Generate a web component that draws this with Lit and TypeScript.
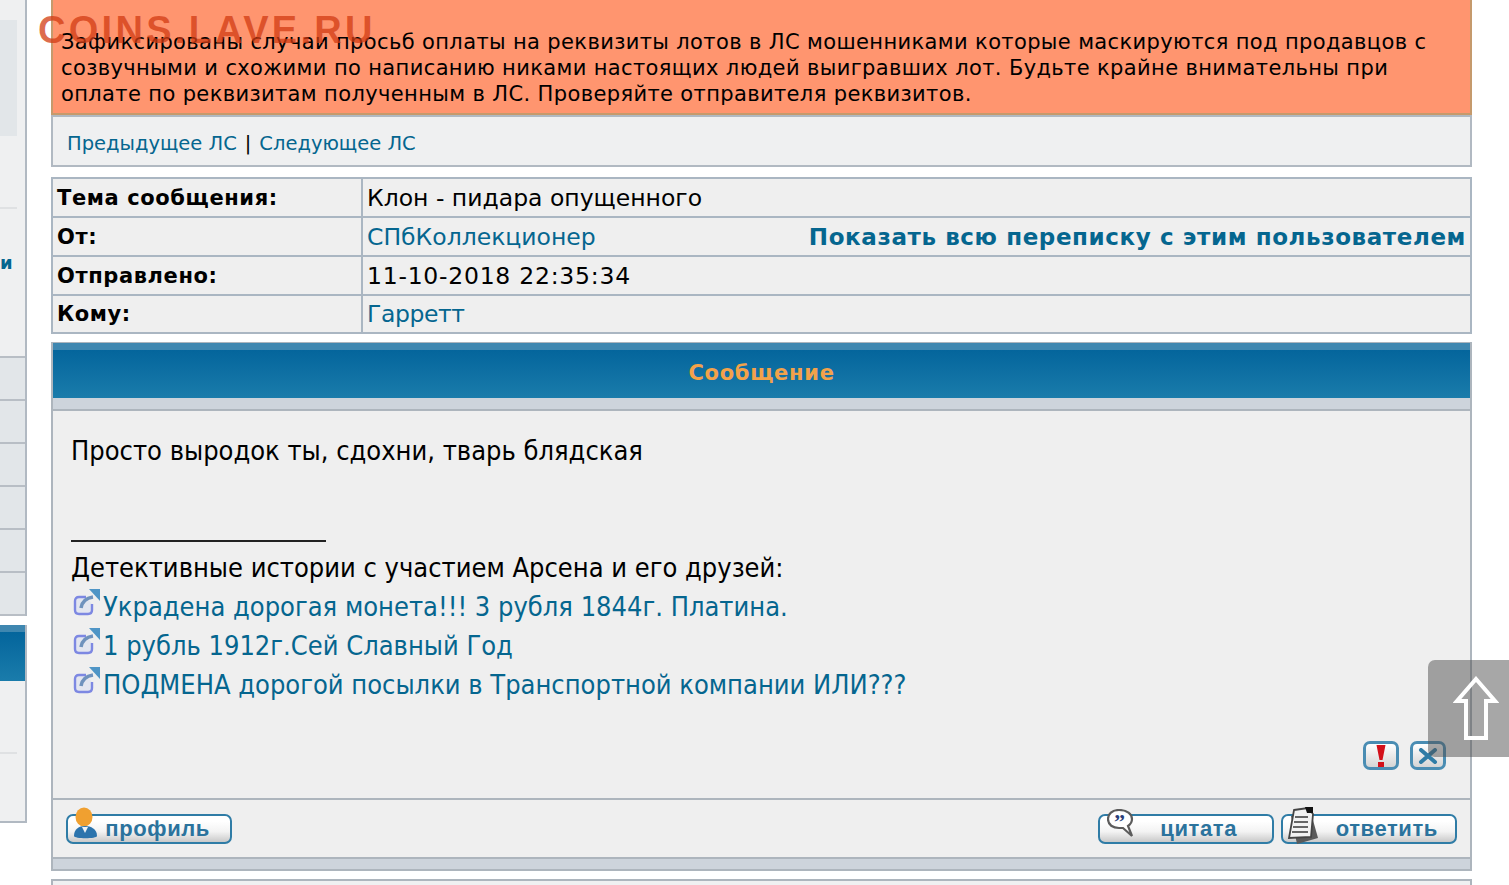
import { LitElement, html, css } from "lit";
import { customElement } from "lit/decorators.js";

const extIcon = html`<svg class="ext" width="28" height="28" viewBox="0 0 28 28" fill="none">
  <path d="M13 9 H6 Q2 9 2 13 V22 Q2 26 6 26 H15 Q19 26 19 22 V16" stroke="#7d88e2" stroke-width="2.4" fill="#e3e6f0"/>
  <path d="M8 20 C9 14 13 10 20 9" stroke="#6f92bd" stroke-width="3.6"/>
  <path d="M16 1 H27 V13 Z" fill="#4f95c6"/>
</svg>`;

@customElement("app-root")
export class AppRoot extends LitElement {
  static styles = css`
    :host { display: block; height: 885px; overflow: hidden; position: relative; background: #fff;
      font-family: "DejaVu Sans", sans-serif; color: #000; }
    a { color: #05668f; text-decoration: none; }
    .page { display: flex; height: 885px; }
    .side { width: 27px; flex: none; display: flex; flex-direction: column; height: 823px; }
    .side-upper { background: #eff0f1; border-right: 2px solid #b1b9c2; flex: none; display: flex; flex-direction: column; }
    .side-top { height: 20px; flex: none; }
    .side-box { height: 116px; width: 17px; background: #e2e6e9; flex: none; }
    .side-mid { height: 220px; flex: none; display: flex; flex-direction: column; }
    .side-rule { margin-top: 71px; height: 2px; background: #dfe1e3; width: 17px; flex: none; }
    .side-word { margin-top: 44px; font-size: 18px; font-weight: 700; line-height: 20px; color: #05668f; }
    .side-list { display: flex; flex-direction: column; flex: none; border-top: 2px solid #b8bec5; }
    .side-item { height: 41px; background: #e2e6e9; border-bottom: 2px solid #b8bec5; }
    .side-gap { height: 9px; background: #fff; flex: none; }
    .side-head { height: 56px; box-sizing: border-box; flex: none; border-right: 2px solid #b1b9c2;
      background: linear-gradient(#3f87b0 0 7px, #04659c 7px, #1a7cab); }
    .side-foot { flex: 1; background: #eff0f1; border: solid #b1b9c2; border-width: 0 2px 2px 0; }

    .main { width: 1421px; margin-left: 24px; flex: none; display: flex; flex-direction: column; }
    .main > * { flex: none; }
    .alert { height: 115px; box-sizing: border-box; background: #ff956f; border: solid #c59a6c; border-width: 0 2px 2px 2px;
      padding: 29px 8px 0; font-size: 21px; line-height: 26px; letter-spacing: 0.37px; }
    .nav { height: 52px; box-sizing: border-box; background: #eff0f1; border: 2px solid #b1b9c2;
      padding: 4px 14px 0; display: flex; align-items: center; gap: 8px; font-size: 19.5px; }
    .meta { margin-top: 10px; border: 2px solid #aab6c2; background: #efefef; display: grid;
      grid-template-columns: 310px 1fr; font-size: 23.5px; }
    .meta > div { height: 37px; display: flex; align-items: center; padding: 0 4px; }
    .meta > div.last { height: 36px; }
    .meta .k { font-weight: 700; border-right: 2px solid #aab6c2; font-size: 21px; letter-spacing: 0.6px; }
    .meta .v { justify-content: space-between; }
    .meta .b { border-bottom: 2px solid #aab6c2; }
    .meta .all { font-weight: 700; font-size: 23px; letter-spacing: 0.6px; }
    .ls-date { letter-spacing: 0.75px; }
    .ls-to { letter-spacing: -0.4px; }
    .post { margin-top: 8px; border: solid #adb5bd; border-width: 1px 2px 2px 2px; background: #efefef; display: flex; flex-direction: column; }
    .post-head { height: 55px; background: linear-gradient(#3f87b0 0 7px, #04659c 7px, #1a7cab); box-sizing: border-box;
      display: flex; align-items: center; justify-content: center; color: #f3a24a; font-weight: 700; font-size: 21px; letter-spacing: 0.7px; padding-top: 4px; }
    .post-sub { height: 11px; background: #cdd4dc; border-bottom: 2px solid #adb5bd; }
    .body { height: 387px; padding: 20px 18px 0 18px; box-sizing: border-box; position: relative;
      font-family: "DejaVu Sans Condensed", "DejaVu Sans", sans-serif; font-stretch: condensed; font-size: 27px; line-height: 39px; }
    .spacer { height: 39px; }
    .sig { width: 255px; border-top: 2px solid #222; margin: 31px 0 6px; height: 0; }
    .link { display: flex; align-items: center; gap: 2px; }
    .ext { flex: none; margin: -9px 0 0 2px; }
    .tools { position: absolute; right: 24px; bottom: 28px; display: flex; gap: 11px; }
    .tool { width: 36px; height: 29px; box-sizing: border-box; border: 3px solid #4a8db3; border-radius: 7px;
      background: linear-gradient(#fff, #d5d5d5); display: flex; align-items: center; justify-content: center; }
    .foot { height: 59px; box-sizing: border-box; border-top: 2px solid #adb5bd; padding: 0 13px; display: flex; align-items: center; justify-content: space-between; }
    .group { display: flex; gap: 7px; }
    .btn { position: relative; height: 30px; box-sizing: border-box; border: 2px solid #2f7ca6; border-radius: 7px;
      background: linear-gradient(#fff 20%, #f3f3f3 60%, #c9c9c9); color: #2b739d; font-family: "Liberation Sans", sans-serif; font-weight: 700;
      font-size: 22px; display: flex; align-items: center; justify-content: flex-end; letter-spacing: 0.6px; }
    .btn svg { position: absolute; }
    .b1 { width: 166px; padding-right: 20px; }
    .b2 { width: 176px; padding-right: 35px; }
    .b3 { width: 176px; padding-right: 17px; }
    .i1 { left: 5px; top: -9px; } .i2 { left: 7px; top: -7px; } .i3 { left: 4px; top: -9px; }
    .bar { height: 10px; background: #cdd4dc; border-top: 2px solid #adb5bd; }
    .next { margin-top: 8px; height: 60px; background: #eff0f1; border: 2px solid #adb5bd; }

    .mark { position: absolute; left: 38px; top: 8px; font-family: "Liberation Sans", sans-serif; font-weight: 700; font-size: 38px; line-height: 44px;
      color: rgba(210, 60, 20, 0.75); letter-spacing: 3.3px; pointer-events: none; }
    .up { position: absolute; left: 1428px; top: 660px; width: 90px; height: 97px; border-radius: 7px; background: rgba(80,80,80,0.5); }
    .up svg { display: block; margin: 16px 0 0 25px; }
  `;

  render() {
    return html`<div class="page">
      <aside class="side">
        <div class="side-upper">
          <div class="side-top"></div>
          <div class="side-box"></div>
          <div class="side-mid">
            <div class="side-rule"></div>
            <div class="side-word">и</div>
          </div>
          <div class="side-list">
            ${[0, 1, 2, 3, 4, 5].map(() => html`<div class="side-item"></div>`)}
          </div>
        </div>
        <div class="side-gap"></div>
        <div class="side-head"></div>
        <div class="side-foot"><div class="side-rule"></div></div>
      </aside>
      <main class="main">
        <section class="alert">Зафиксированы случаи просьб оплаты на реквизиты лотов в ЛС мошенниками которые маскируются под продавцов с созвучными и схожими по написанию никами настоящих людей выигравших лот. Будьте крайне внимательны при оплате по реквизитам полученным в ЛС. Проверяйте отправителя реквизитов.</section>
        <nav class="nav"><a href="#">Предыдущее ЛС</a><span>|</span><a href="#">Следующее ЛС</a></nav>
        <section class="meta">
          <div class="k b">Тема сообщения:</div><div class="v b">Клон - пидара опущенного</div>
          <div class="k b">От:</div><div class="v b"><a href="#">СПбКоллекционер</a><a class="all" href="#">Показать всю переписку с этим пользователем</a></div>
          <div class="k b">Отправлено:</div><div class="v b ls-date">11-10-2018 22:35:34</div>
          <div class="k last">Кому:</div><div class="v last"><a class="ls-to" href="#">Гарретт</a></div>
        </section>
        <section class="post">
          <div class="post-head">Сообщение</div>
          <div class="post-sub"></div>
          <div class="body">
            <div>Просто выродок ты, сдохни, тварь блядская</div>
            <div class="spacer"></div>
            <div class="sig"></div>
            <div>Детективные истории с участием Арсена и его друзей:</div>
            <div class="link">${extIcon}<a href="#">Украдена дорогая монета!!! 3 рубля 1844г. Платина.</a></div>
            <div class="link">${extIcon}<a href="#">1 рубль 1912г.Сей Славный Год</a></div>
            <div class="link">${extIcon}<a href="#">ПОДМЕНА дорогой посылки в Транспортной компании ИЛИ???</a></div>
            <div class="tools">
              <div class="tool"><svg width="10" height="24" viewBox="0 0 10 24"><path d="M0.5 1 H9.5 L6.5 16 H3.5 Z M2 18 H8 V23 H2 Z" fill="#d3101a"/></svg></div>
              <div class="tool"><svg width="20" height="16" viewBox="0 0 20 16"><path d="M3 2 L17 14 M3 14 L17 2" stroke="#2f7ca6" stroke-width="4" stroke-linecap="round"/></svg></div>
            </div>
          </div>
          <div class="foot">
            <div class="btn b1">
              <svg class="i1" width="26" height="32" viewBox="0 0 26 32"><ellipse cx="11" cy="10" rx="8.5" ry="9.5" fill="#f0a030"/><path d="M1 29 C1 22 6 19 12 19 C18 19 24 22 24 29 C24 32 1 32 1 29 Z" fill="#2c74ad"/><path d="M9 20 L12 26 L15 20 Z" fill="#eef2f6"/></svg>
              профиль
            </div>
            <div class="group">
              <div class="btn b2">
                <svg class="i2" width="28" height="28" viewBox="0 0 28 28"><path d="M12 1 C5 1 1 5 1 10 C1 16 6 19 12 19 L16 19 L25 27 L21 17 C24 15 25 13 25 10 C25 5 20 1 12 1 Z" fill="#fff" stroke="#5c5c5c" stroke-width="2.2"/><text x="7" y="20" font-size="22" font-weight="700" fill="#2a3f7a" font-family="Liberation Serif, serif">”</text></svg>
                цитата
              </div>
              <div class="btn b3">
                <svg class="i3" width="32" height="38" viewBox="0 0 32 38"><path d="M4 9 L24 6 L31 31 L10 37 Z" fill="#5a5a5a"/><path d="M7 3 L21 1 L26 7 L24 30 L2 31 Z" fill="#f2f2f2" stroke="#444" stroke-width="1.8"/><path d="M8 10 H21 M7 15 H21 M6 20 H21 M5 25 H21" stroke="#666" stroke-width="1.8"/><path d="M18 0 H26 V6 H20 Z" fill="#111"/></svg>
                ответить
              </div>
            </div>
          </div>
          <div class="bar"></div>
        </section>
        <div class="next"></div>
      </main>
    </div>
    <div class="mark">COINS.LAVE.RU</div>
    <div class="up"><svg width="46" height="66" viewBox="0 0 46 66"><path d="M23 3 L42 25 H33 V62 H13 V25 H4 Z" fill="none" stroke="#fff" stroke-width="4"/></svg></div>`;
  }
}
